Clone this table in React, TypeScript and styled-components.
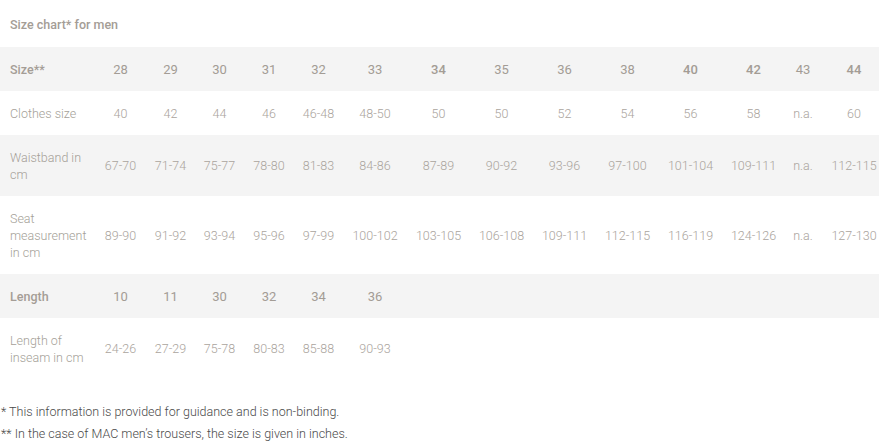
import React from "react";
import styled, { createGlobalStyle } from "styled-components";

const Global = createGlobalStyle`
  html, body { margin: 0; padding: 0; background: #ffffff; }
  body { font-family: Roboto, "Liberation Sans", sans-serif; }
`;

const Page = styled.div`
  width: 879px;
  overflow: hidden;
`;

const Title = styled.h3`
  margin: 16px 0 13px 10px;
  font-size: 12.5px;
  line-height: 18px;
  font-weight: 500;
  color: #a49d96;
`;

const Table = styled.table`
  width: 887px;
  table-layout: fixed;
  border-collapse: collapse;
  border-spacing: 0;
`;

const Row = styled.tr<{ $shaded?: boolean }>`
  background: ${(p) => (p.$shaded ? "#f4f4f4" : "transparent")};
`;

const Label = styled.td<{ $head?: boolean }>`
  padding: 13.5px 6px 13.5px 10px;
  text-align: left;
  vertical-align: middle;
  font-size: 12.5px;
  line-height: 17px;
  font-weight: ${(p) => (p.$head ? 500 : 300)};
  color: ${(p) => (p.$head ? "#a49d96" : "#a59f98")};
`;

const Cell = styled.td<{ $head?: boolean; $strong?: boolean }>`
  padding: 13.5px 0;
  text-align: center;
  vertical-align: middle;
  white-space: nowrap;
  font-size: ${(p) => (p.$head ? "13px" : "12.5px")};
  line-height: 17px;
  font-weight: ${(p) => (p.$head ? (p.$strong ? 500 : 400) : 300)};
  color: ${(p) => (p.$head ? "#a39c95" : "#aaa49d")};
`;

const Notes = styled.div`
  margin-top: 22px;
  font-size: 12.5px;
  line-height: 22px;
  font-weight: 300;
  color: #4a4a4a;
  padding-left: 1px;
`;

const widths = [95, 51, 49, 49, 50, 49, 64, 63, 63, 63, 63, 63, 63, 36, 66];

const sizes = ["28", "29", "30", "31", "32", "33", "34", "35", "36", "38", "40", "42", "43", "44"];
const strongSizes = new Set(["34", "40", "42", "44"]);

const rows: { label: string; values: string[]; shaded: boolean }[] = [
  {
    label: "Clothes size",
    values: ["40", "42", "44", "46", "46-48", "48-50", "50", "50", "52", "54", "56", "58", "n.a.", "60"],
    shaded: false,
  },
  {
    label: "Waistband in cm",
    values: ["67-70", "71-74", "75-77", "78-80", "81-83", "84-86", "87-89", "90-92", "93-96", "97-100", "101-104", "109-111", "n.a.", "112-115"],
    shaded: true,
  },
  {
    label: "Seat measurement in cm",
    values: ["89-90", "91-92", "93-94", "95-96", "97-99", "100-102", "103-105", "106-108", "109-111", "112-115", "116-119", "124-126", "n.a.", "127-130"],
    shaded: false,
  },
];

const lengths = ["10", "11", "30", "32", "34", "36"];
const inseams = ["24-26", "27-29", "75-78", "80-83", "85-88", "90-93"];

function pad(values: string[]) {
  return [...values, ...Array(14 - values.length).fill("")];
}

export default function App() {
  return (
    <Page>
      <Global />
      <Title>Size chart* for men</Title>
      <Table>
        <colgroup>
          {widths.map((w, i) => (
            <col key={i} style={{ width: w }} />
          ))}
        </colgroup>
        <tbody>
          <Row $shaded>
            <Label $head>Size**</Label>
            {sizes.map((s) => (
              <Cell key={s} $head $strong={strongSizes.has(s)}>
                {s}
              </Cell>
            ))}
          </Row>
          {rows.map((r) => (
            <Row key={r.label} $shaded={r.shaded}>
              <Label>{r.label}</Label>
              {r.values.map((v, i) => (
                <Cell key={i}>{v}</Cell>
              ))}
            </Row>
          ))}
          <Row $shaded>
            <Label $head>Length</Label>
            {pad(lengths).map((v, i) => (
              <Cell key={i} $head>
                {v}
              </Cell>
            ))}
          </Row>
          <Row>
            <Label>Length of inseam in cm</Label>
            {pad(inseams).map((v, i) => (
              <Cell key={i}>{v}</Cell>
            ))}
          </Row>
        </tbody>
      </Table>
      <Notes>
        <div>* This information is provided for guidance and is non-binding.</div>
        <div>** In the case of MAC men’s trousers, the size is given in inches.</div>
      </Notes>
    </Page>
  );
}
